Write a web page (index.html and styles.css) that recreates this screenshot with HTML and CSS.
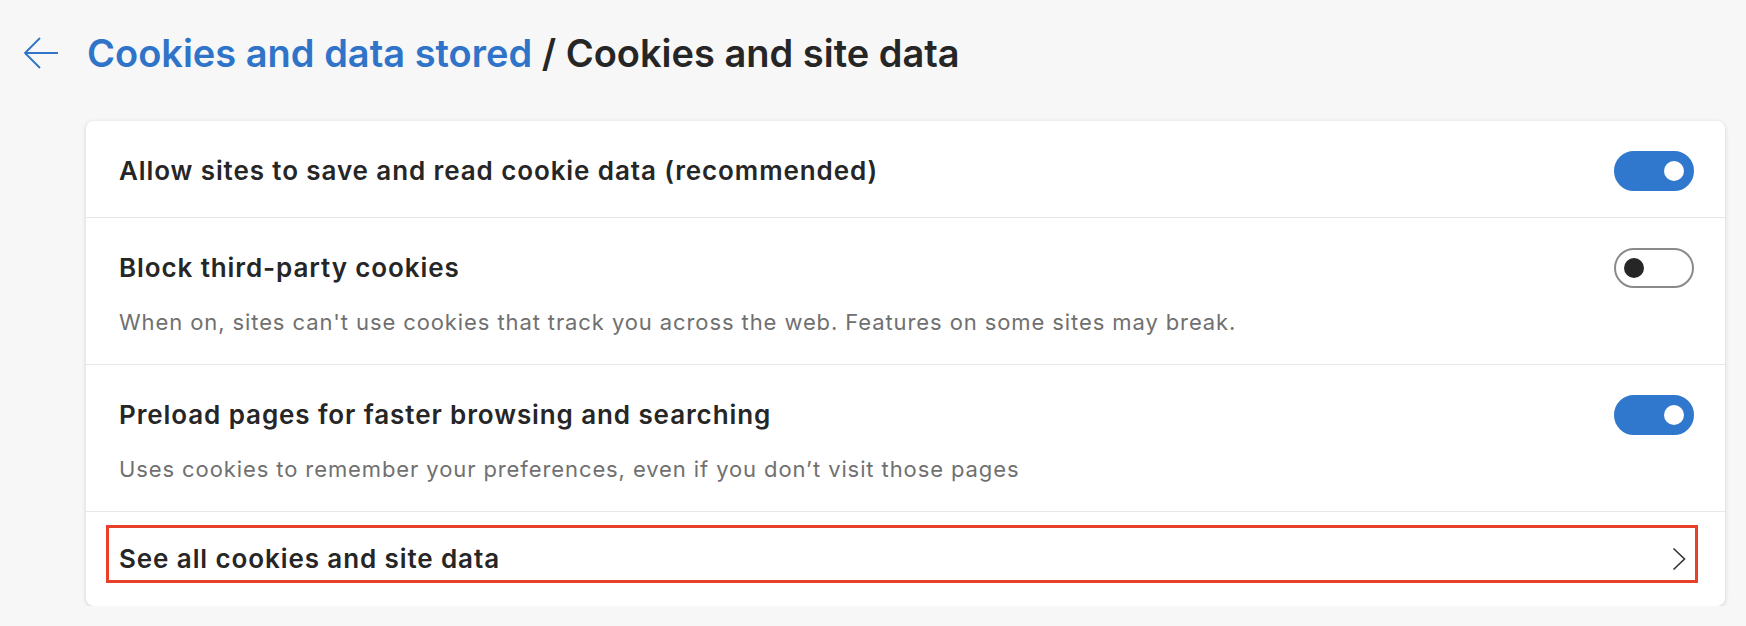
FILE: index.html
```html
<!DOCTYPE html>
<html lang="en">
<head>
  <meta charset="UTF-8">
  <title>Cookies and site data</title>
  <link rel="stylesheet" href="styles.css">
</head>
<body>

  <div class="header">
    <button class="back" aria-label="Back">
      <svg width="36" height="34" viewBox="0 0 36 34">
        <path d="M35 17H2M17 2L2 17l15 15" fill="none" stroke="#2f74c9" stroke-width="1.8" stroke-linejoin="round"/>
      </svg>
    </button>
    <h1><span class="crumb">Cookies and data stored</span> / Cookies and site data</h1>
  </div>

  <div class="card">
    <div class="row">
      <div class="text">
        <div class="title">Allow sites to save and read cookie data (recommended)</div>
      </div>
      <div class="toggle on"><span class="knob"></span></div>
    </div>

    <div class="row">
      <div class="text">
        <div class="title">Block third-party cookies</div>
        <div class="desc">When on, sites can't use cookies that track you across the web. Features on some sites may break.</div>
      </div>
      <div class="toggle"><span class="knob"></span></div>
    </div>

    <div class="row">
      <div class="text">
        <div class="title">Preload pages for faster browsing and searching</div>
        <div class="desc">Uses cookies to remember your preferences, even if you don’t visit those pages</div>
      </div>
      <div class="toggle on"><span class="knob"></span></div>
    </div>

    <div class="row link-row">
      <a class="link" href="#">
        <span class="title">See all cookies and site data</span>
        <svg width="14" height="24" viewBox="0 0 14 24">
          <path d="M1.5 1.5L12.5 12L1.5 22.5" fill="none" stroke="#333" stroke-width="1.6"/>
        </svg>
      </a>
    </div>
  </div>

</body>
</html>
```

FILE: styles.css
```css
body {
  margin: 0;
  background: #f7f7f7;
  font-family: Inter, "Noto Sans", sans-serif;
  color: #262626;
}

.header {
  display: flex;
  align-items: center;
  padding: 33px 0 0 23px;
  height: 40px;
}

.back {
  background: none;
  border: none;
  padding: 0;
  margin-right: 28px;
  display: flex;
  cursor: pointer;
}

h1 {
  margin: 0;
  font-size: 38px;
  font-weight: 600;
  color: #262626;
}

.crumb {
  color: #2f74c9;
}

.card {
  margin: 48px 21px 0 86px;
  background: white;
  border-radius: 8px;
  box-shadow: 0 1px 4px rgba(0,0,0,0.16);
}

.row {
  display: flex;
  justify-content: space-between;
  align-items: flex-start;
  padding: 30px 31px 26px 33px;
  border-bottom: 1px solid #e8e8e8;
}

.row:last-child {
  border-bottom: none;
}

.title {
  font-size: 26px;
  font-weight: 600;
  letter-spacing: 0.9px;
  line-height: 40px;
}

.desc {
  margin-top: 20px;
  font-size: 22px;
  letter-spacing: 0.9px;
  line-height: 28px;
  color: #707070;
  padding-bottom: 2px;
}

.toggle {
  width: 80px;
  height: 40px;
  box-sizing: border-box;
  border-radius: 20px;
  border: 2px solid #8a8a8a;
  background: white;
  display: flex;
  align-items: center;
  padding: 0 8px;
}

.toggle .knob {
  width: 20px;
  height: 20px;
  border-radius: 50%;
  background: #262626;
}

.toggle.on {
  background: #3078cd;
  border-color: #3078cd;
  justify-content: flex-end;
}

.toggle.on .knob {
  background: white;
}

.link-row {
  padding: 13px 27px 23px 20px;
}

.link {
  flex: 1;
  display: flex;
  justify-content: space-between;
  align-items: center;
  border: 3px solid #e8402a;
  padding: 11px 9px 1px 10px;
  color: #262626;
  text-decoration: none;
}
```
